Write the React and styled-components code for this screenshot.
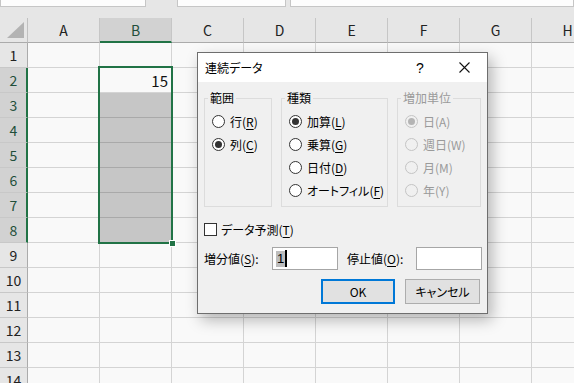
import React from 'react';
import styled, { createGlobalStyle } from 'styled-components';

const GlobalStyle = createGlobalStyle`
  html, body { margin: 0; padding: 0; background: #f9f9f9; }
  body { font-family: "Noto Sans CJK JP", "Noto Sans", sans-serif; }
`;

const Page = styled.div`
  position: relative;
  width: 574px;
  height: 383px;
  overflow: hidden;
  background: #f9f9f9;
`;

const TopStrip = styled.div`
  height: 18px;
  background: #e6e6e6;
  display: flex;
  align-items: flex-start;
`;

const FieldBox = styled.div`
  height: 7px;
  box-sizing: border-box;
  background: #fdfdfd;
  border: 1px solid #c6c6c6;
  border-top: none;
  width: ${(p) => (p.$w ? `${p.$w}px` : 'auto')};
  flex: ${(p) => (p.$w ? 'none' : '1')};
  margin-left: ${(p) => p.$ml || 0}px;
`;

const Sheet = styled.div`
  position: relative;
  display: grid;
  grid-template-columns: 28px repeat(8, 72px);
  grid-auto-rows: 25px;
  font-family: "Noto Sans CJK JP", "Noto Sans", sans-serif;
  font-size: 14px;
  color: #222;
`;

const Corner = styled.div`
  background: #e6e6e6;
  border-right: 1px solid #c0c0c0;
  border-bottom: 1px solid #ababab;
  box-sizing: border-box;
  display: flex;
  justify-content: flex-end;
  align-items: flex-end;
  padding: 0 3px 4px 0;
`;

const ColHead = styled.div`
  box-sizing: border-box;
  background: ${(p) => (p.$sel ? '#d2d2d2' : '#e6e6e6')};
  border-right: 1px solid #c6c6c6;
  border-bottom: ${(p) => (p.$sel ? '2px solid #217346' : '1px solid #ababab')};
  color: ${(p) => (p.$sel ? '#1f4f3a' : '#222')};
  display: flex;
  align-items: center;
  justify-content: center;
  padding-top: ${(p) => (p.$sel ? '1px' : '0')};
  line-height: 1;
`;

const RowHead = styled.div`
  box-sizing: border-box;
  background: ${(p) => (p.$sel ? '#d2d2d2' : '#e6e6e6')};
  border-right: ${(p) => (p.$sel ? '2px solid #217346' : '1px solid #ababab')};
  border-bottom: 1px solid #c8c8c8;
  color: ${(p) => (p.$sel ? '#1f4f3a' : '#222')};
  display: flex;
  align-items: center;
  justify-content: center;
  padding-left: ${(p) => (p.$sel ? '1px' : '0')};
  line-height: 1;
`;

const Cell = styled.div`
  box-sizing: border-box;
  background: ${(p) => (p.$fill ? '#c6c6c6' : '#f9f9f9')};
  border-right: 1px solid #d4d4d4;
  border-bottom: 1px solid ${(p) => (p.$fill ? '#a9a9a9' : '#d4d4d4')};
  display: flex;
  align-items: center;
  justify-content: flex-end;
  padding-right: 3px;
  font-size: 15px;
  line-height: 1;
  color: #111;
`;

const Selection = styled.div`
  position: absolute;
  grid-column: 3 / 4;
  grid-row: 3 / 10;
  top: -2px;
  left: -2px;
  right: -1px;
  bottom: -1px;
  border: 2px solid #217346;
  pointer-events: none;
`;

const FillHandle = styled.span`
  position: absolute;
  right: -5px;
  bottom: -5px;
  width: 5px;
  height: 5px;
  background: #217346;
  border: 1px solid #fff;
`;

/* ---------- Dialog ---------- */

const Dialog = styled.div`
  position: absolute;
  left: 197px;
  top: 52px;
  width: 291px;
  height: 262px;
  box-sizing: border-box;
  border: 1px solid #6e6e6e;
  background: #f0f0f0;
  box-shadow: 4px 6px 14px rgba(0, 0, 0, 0.28);
  display: flex;
  flex-direction: column;
  font-family: "Noto Sans CJK JP", "Noto Sans", sans-serif;
  font-feature-settings: "palt";
  font-size: 12px;
  color: #000;
  z-index: 10;
`;

const TitleBar = styled.div`
  height: 29px;
  flex: none;
  background: #fff;
  display: flex;
  align-items: center;
`;

const Title = styled.div`
  flex: 1;
  padding-left: 7px;
  padding-bottom: 1px;
`;

const TitleButton = styled.div`
  width: ${(p) => p.$w}px;
  height: 29px;
  display: flex;
  align-items: center;
  justify-content: center;
  font-size: 14px;
  font-family: "Liberation Sans", sans-serif;
`;

const Body = styled.div`
  flex: 1;
  padding: 8px 6px 0 6px;
  display: flex;
  flex-direction: column;
`;

const Groups = styled.div`
  display: flex;
  gap: 9px;
`;

const Group = styled.fieldset`
  margin: 0;
  padding: 0 0 0 7px;
  width: ${(p) => p.$w}px;
  height: 117px;
  box-sizing: border-box;
  border: 1px solid #dcdcdc;
  min-width: 0;
  display: flex;
  flex-direction: column;
`;

const Legend = styled.legend`
  padding: 0 2px;
  margin-left: -4px;
  line-height: 16px;
  color: ${(p) => (p.$disabled ? '#9a9a9a' : '#000')};
`;

const OptionList = styled.div`
  display: flex;
  flex-direction: column;
  padding-top: 4px;
`;

const Option = styled.label`
  display: flex;
  align-items: center;
  height: 23px;
  gap: 5px;
  white-space: nowrap;
  color: ${(p) => (p.$disabled ? '#9a9a9a' : '#000')};
`;

const Radio = styled.span`
  width: 13px;
  height: 13px;
  box-sizing: border-box;
  border-radius: 50%;
  border: 1px solid ${(p) => (p.$disabled ? '#c4c4c4' : '#333')};
  background: ${(p) => (p.$disabled ? '#f0f0f0' : '#fff')};
  display: flex;
  align-items: center;
  justify-content: center;
  flex: none;

  &::after {
    content: '';
    width: 7px;
    height: 7px;
    border-radius: 50%;
    background: ${(p) => (p.$disabled ? '#b4b4b4' : '#333')};
    display: ${(p) => (p.$checked ? 'block' : 'none')};
  }
`;

const U = styled.span`
  text-decoration: underline;
  text-underline-offset: 2px;
`;

const CheckRow = styled.label`
  display: flex;
  align-items: center;
  gap: 4px;
  margin-top: 16px;
  height: 13px;
`;

const CheckBox = styled.span`
  width: 13px;
  height: 13px;
  box-sizing: border-box;
  border: 1px solid #333;
  background: #fff;
  flex: none;
`;

const InputRow = styled.div`
  display: flex;
  align-items: center;
  margin-top: 11px;
  height: 23px;
`;

const InputLabel = styled.span`
  width: ${(p) => p.$w}px;
  flex: none;
  white-space: nowrap;
`;

const TextBox = styled.div`
  width: 66px;
  height: 23px;
  box-sizing: border-box;
  border: 1px solid #a6a6a6;
  background: #fff;
  display: flex;
  align-items: center;
  padding-left: 3px;
  margin-right: ${(p) => p.$mr || 0}px;
  flex: none;
`;

const Highlight = styled.span`
  background: #bdbdbd;
  height: 16px;
  line-height: 16px;
  padding: 0 1px;
  font-size: 13px;
  font-family: "Liberation Sans", sans-serif;
`;

const Caret = styled.span`
  width: 2px;
  height: 17px;
  background: #000;
`;

const ButtonRow = styled.div`
  display: flex;
  justify-content: flex-end;
  gap: 10px;
  margin-top: 9px;
  padding-right: 1px;
`;

const Button = styled.div`
  width: ${(p) => p.$w}px;
  height: 25px;
  box-sizing: border-box;
  background: #e1e1e1;
  border: ${(p) => (p.$primary ? '2px solid #0078d7' : '1px solid #adadad')};
  display: flex;
  align-items: center;
  justify-content: center;
  font-size: 12px;
`;

const cols = ['A', 'B', 'C', 'D', 'E', 'F', 'G', 'H'];
const rows = Array.from({ length: 15 }, (_, i) => i + 1);

function RadioOption({ checked, disabled, children }) {
  return (
    <Option $disabled={disabled}>
      <Radio $checked={checked} $disabled={disabled} />
      <span>{children}</span>
    </Option>
  );
}

export default function App() {
  return (
    <Page>
      <GlobalStyle />
      <TopStrip>
        <FieldBox $w={146} />
        <FieldBox $w={109} $ml={31} />
        <FieldBox $ml={4} />
      </TopStrip>
      <Sheet>
        <Corner>
          <svg width="17" height="16" viewBox="0 0 17 16">
            <polygon points="17,0 17,16 0,16" fill="#b3b3b3" />
          </svg>
        </Corner>
        {cols.map((c) => (
          <ColHead key={c} $sel={c === 'B'}>
            {c}
          </ColHead>
        ))}
        {rows.map((r) => (
          <React.Fragment key={r}>
            <RowHead $sel={r >= 2 && r <= 8}>{r}</RowHead>
            {cols.map((c) => (
              <Cell key={c} $fill={c === 'B' && r >= 3 && r <= 8}>
                {c === 'B' && r === 2 ? '15' : ''}
              </Cell>
            ))}
          </React.Fragment>
        ))}
        <Selection>
          <FillHandle />
        </Selection>
      </Sheet>

      <Dialog>
        <TitleBar>
          <Title>連続データ</Title>
          <TitleButton $w={44}>?</TitleButton>
          <TitleButton $w={45}>
            <svg width="11" height="11" viewBox="0 0 11 11">
              <path d="M0.5 0.5 L10.5 10.5 M10.5 0.5 L0.5 10.5" stroke="#111" strokeWidth="1.1" fill="none" />
            </svg>
          </TitleButton>
        </TitleBar>
        <Body>
          <Groups>
            <Group $w={68}>
              <Legend>範囲</Legend>
              <OptionList>
                <RadioOption>行(<U>R</U>)</RadioOption>
                <RadioOption checked>列(<U>C</U>)</RadioOption>
              </OptionList>
            </Group>
            <Group $w={107}>
              <Legend>種類</Legend>
              <OptionList>
                <RadioOption checked>加算(<U>L</U>)</RadioOption>
                <RadioOption>乗算(<U>G</U>)</RadioOption>
                <RadioOption>日付(<U>D</U>)</RadioOption>
                <RadioOption>オートフィル(<U>F</U>)</RadioOption>
              </OptionList>
            </Group>
            <Group $w={84}>
              <Legend $disabled>増加単位</Legend>
              <OptionList>
                <RadioOption checked disabled>日(A)</RadioOption>
                <RadioOption disabled>週日(W)</RadioOption>
                <RadioOption disabled>月(M)</RadioOption>
                <RadioOption disabled>年(Y)</RadioOption>
              </OptionList>
            </Group>
          </Groups>
          <CheckRow>
            <CheckBox />
            <span>データ予測(<U>T</U>)</span>
          </CheckRow>
          <InputRow>
            <InputLabel $w={68}>増分値(<U>S</U>):</InputLabel>
            <TextBox $mr={9}>
              <Highlight>1</Highlight>
              <Caret />
            </TextBox>
            <InputLabel $w={69}>停止値(<U>O</U>):</InputLabel>
            <TextBox />
          </InputRow>
          <ButtonRow>
            <Button $w={74} $primary>OK</Button>
            <Button $w={75}>キャンセル</Button>
          </ButtonRow>
        </Body>
      </Dialog>
    </Page>
  );
}
